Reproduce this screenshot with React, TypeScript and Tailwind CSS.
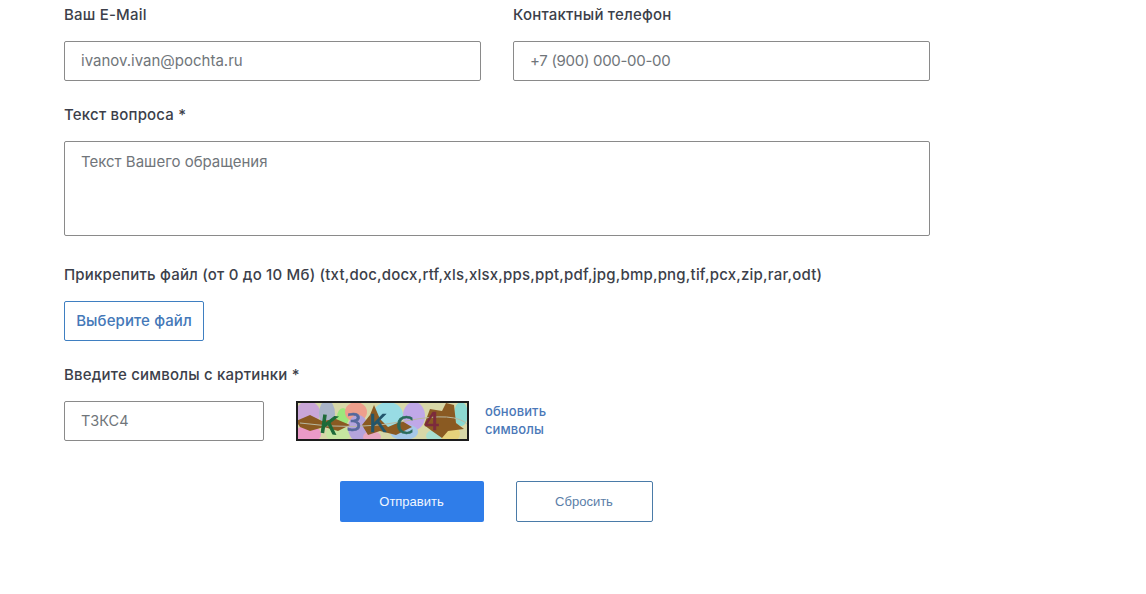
export default function App() {
  const label = "block text-[15px] leading-5 font-medium tracking-[0.2px] text-[#3c3f4a] mb-4";
  const field =
    "block w-full h-10 border border-[#8a8a8a] rounded-[2px] px-4 pb-[2px] text-[15px] text-[#3c3f4a] placeholder:text-[#70757a] outline-none";

  return (
    <div className="w-[1146px] h-[594px] bg-white overflow-hidden pl-16 pt-[5px] font-['Inter',sans-serif]">
      <form className="w-[866px]">
        <div className="grid grid-cols-2 gap-8">
          <div>
            <label className={label}>Ваш E-Mail</label>
            <input className={field} placeholder="ivanov.ivan@pochta.ru" />
          </div>
          <div>
            <label className={label}>Контактный телефон</label>
            <input className={`${field} tracking-[-0.3px]`} placeholder="+7 (900) 000-00-00" />
          </div>
        </div>

        <div className="mt-6">
          <label className={label}>Текст вопроса *</label>
          <textarea
            className="block w-full h-[95px] border border-[#8a8a8a] rounded-[2px] px-4 py-[10px] text-[15px] leading-5 resize-none placeholder:text-[#70757a] outline-none"
            placeholder="Текст Вашего обращения"
          />
        </div>

        <div className="mt-[29px]">
          <label className={label}>
            Прикрепить файл (от 0 до 10 Мб) (txt,doc,docx,rtf,xls,xlsx,pps,ppt,pdf,jpg,bmp,png,tif,pcx,zip,rar,odt)
          </label>
          <button
            type="button"
            className="block w-[140px] h-10 border border-[#3f7fc1] rounded-[2px] text-[15px] font-medium tracking-[0.1px] text-[#4478b8]"
          >
            Выберите файл
          </button>
        </div>

        <div className="mt-6">
          <label className={label}>Введите символы с картинки *</label>
          <div className="flex items-center">
            <input className={`${field} !w-[200px] !text-[14.5px]`} placeholder="Т3КС4" />
            <Captcha />
            <a className="ml-4 mb-[2px] w-[70px] text-[13px] leading-[18px] font-medium tracking-[0.1px] text-[#4a78b8]">
              обновить символы
            </a>
          </div>
        </div>

        <div className="flex justify-center gap-8 mt-10 pr-[2px]">
          <button
            type="button"
            className="w-[144px] h-[41px] rounded-[2px] bg-[#2f7de9] text-[13px] text-[#f0f6ff] font-['Liberation_Sans',sans-serif]"
          >
            Отправить
          </button>
          <button
            type="button"
            className="w-[137px] h-[41px] border border-[#4a7ba8] rounded-[2px] bg-white text-[13px] text-[#5a7ea8] font-['Liberation_Sans',sans-serif]"
          >
            Сбросить
          </button>
        </div>
      </form>
    </div>
  );
}

function Captcha() {
  return (
    <svg width="173" height="40" viewBox="0 0 173 40" className="ml-8 shrink-0 block">
      <defs>
        <filter id="soft">
          <feGaussianBlur stdDeviation="0.5" />
        </filter>
      </defs>
      <g filter="url(#soft)">
        <rect width="173" height="40" fill="#d8d8a8" />
        <ellipse cx="12" cy="12" rx="12" ry="12" fill="#c9a6d8" />
        <ellipse cx="12" cy="33" rx="13" ry="9" fill="#ea9ac8" />
        <ellipse cx="31" cy="13" rx="8" ry="14" fill="#a9b4c8" />
        <ellipse cx="47" cy="16" rx="6" ry="9" fill="#9ce87c" />
        <ellipse cx="60" cy="11" rx="11" ry="10" fill="#ee9f8c" />
        <ellipse cx="42" cy="33" rx="12" ry="8" fill="#c6e6a0" />
        <ellipse cx="62" cy="27" rx="10" ry="13" fill="#b4a4dc" />
        <ellipse cx="92" cy="14" rx="15" ry="13" fill="#98dce4" />
        <ellipse cx="118" cy="15" rx="11" ry="14" fill="#c0a8e8" />
        <ellipse cx="108" cy="31" rx="14" ry="8" fill="#a6c8e8" />
        <ellipse cx="154" cy="33" rx="10" ry="8" fill="#e6d27c" />
        <ellipse cx="165" cy="13" rx="7" ry="12" fill="#8cd8d0" />
        <ellipse cx="138" cy="35" rx="8" ry="6" fill="#a8e0d0" />
        <ellipse cx="76" cy="36" rx="9" ry="6" fill="#e8a8c0" />
        <path d="M0 20 L14 14 L26 20 L40 18 L54 24 L42 30 L28 26 L14 30 L4 26 Z" fill="#8a5a24" />
        <path d="M66 24 L74 14 L78 4 L84 18 L92 26 L106 20 L116 26 L100 34 L84 30 L72 34 Z" fill="#8a5a24" />
        <path d="M128 24 L134 8 L146 10 L150 2 L158 4 L160 22 L168 28 L152 30 L146 37 L136 30 Z" fill="#8a5a24" />
        <path d="M4 22 Q60 30 110 20 T172 24" fill="none" stroke="#b8b8a0" strokeWidth="1" />
        <g fontFamily="DejaVu Sans" fontWeight="400">
          <text x="23" y="31" fontSize="24" fill="#1f6b38" stroke="#1f6b38" strokeWidth="1.2" transform="rotate(8 23 31)">К</text>
          <text x="50" y="30" fontSize="25" fill="#56689c" stroke="#56689c" strokeWidth="0.6">3</text>
          <text x="73" y="31" fontSize="25" fill="#24566c" stroke="#24566c" strokeWidth="0.6">К</text>
          <text x="100" y="33" fontSize="25" fill="#2a6a5c" stroke="#2a6a5c" strokeWidth="0.6">С</text>
          <text x="128" y="29" fontSize="25" fill="#7c2c3c" stroke="#7c2c3c" strokeWidth="0.6">4</text>
        </g>
      </g>
      <rect x="1" y="1" width="171" height="38" fill="none" stroke="#1c1c1c" strokeWidth="2" />
    </svg>
  );
}
